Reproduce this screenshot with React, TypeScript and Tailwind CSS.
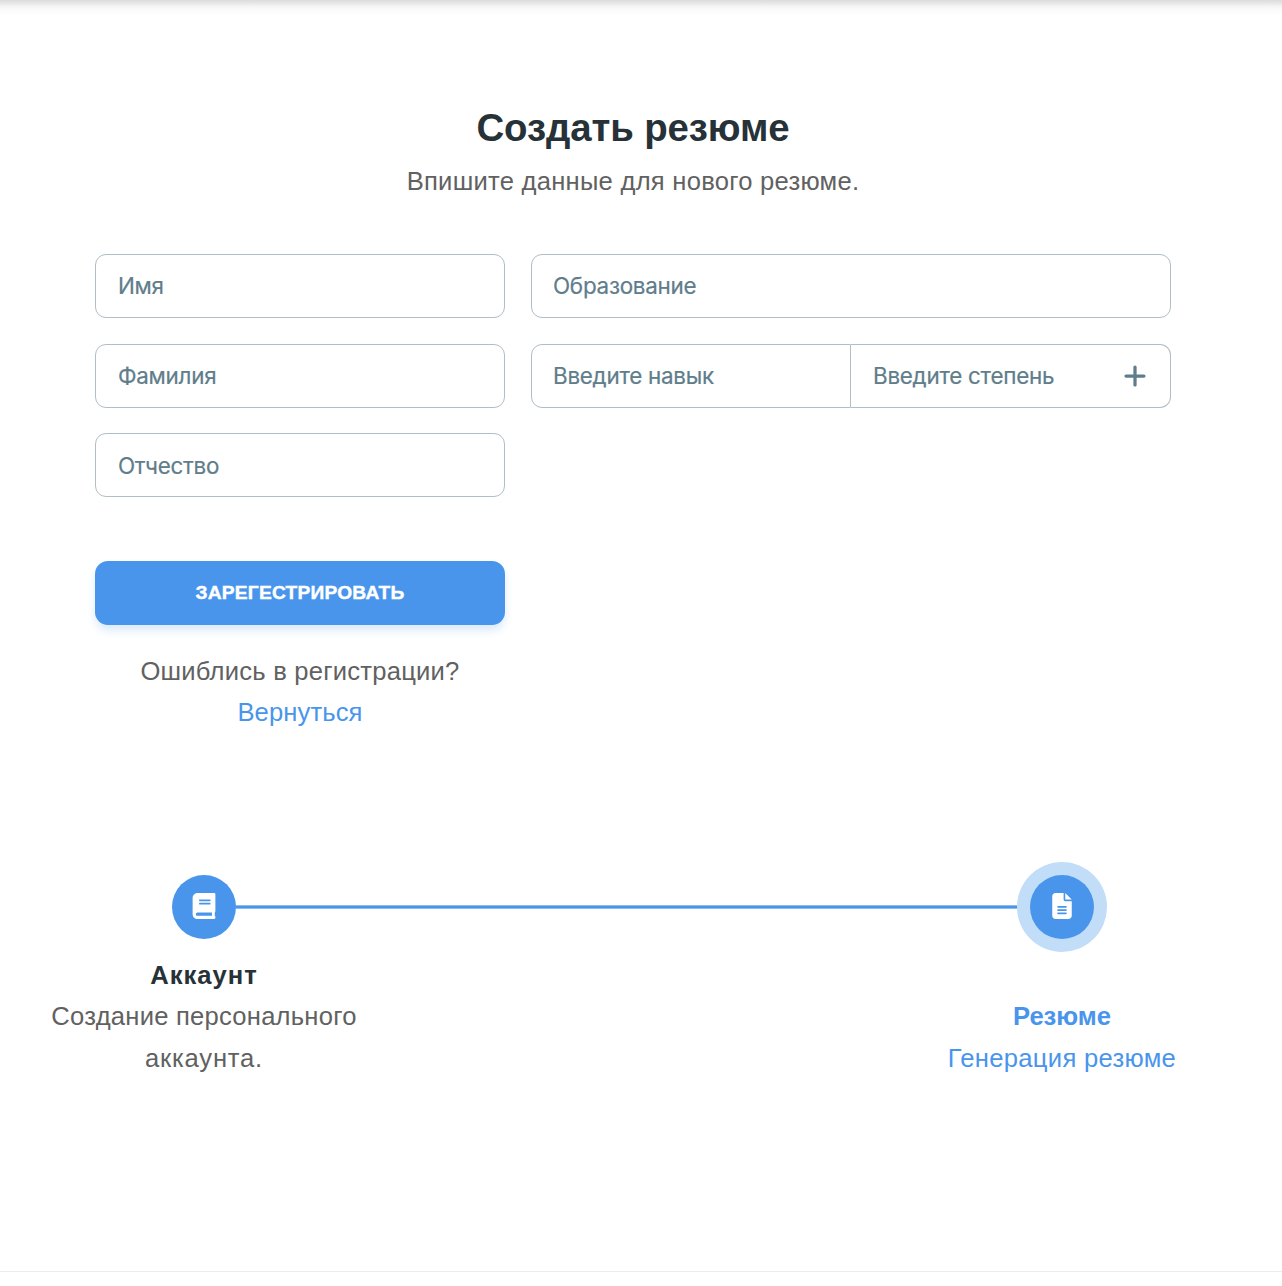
import type { ReactNode } from "react";
import { FaBook } from "react-icons/fa";
import { FaFileLines, FaPlus } from "react-icons/fa6";

function Field({ label, className = "h-16 rounded-[11px] border px-[22px] pt-px" }: { label: string; className?: string }) {
  return (
    <label className={`flex items-center border-[#b0bec5] font-['Inter',sans-serif] text-[22.4px] tracking-[-0.25px] text-[#607d8b] [-webkit-text-stroke:0.2px_#607d8b] ${className}`}>
      <span className="whitespace-nowrap">{label}</span>
    </label>
  );
}

function Circle({ children, active = false }: { children: ReactNode; active?: boolean }) {
  return (
    <div className={`flex size-16 shrink-0 items-center justify-center rounded-full bg-[#4995ec] pb-px text-[26px] text-white ${active ? "ring-[13px] ring-[#c2ddf8]" : ""}`}>
      {children}
    </div>
  );
}

export default function App() {
  return (
    <div className="flex h-[1286px] w-[1282px] flex-col overflow-hidden bg-white font-['Liberation_Sans',Arial,sans-serif]">
      <div className="h-4 shrink-0 bg-[linear-gradient(to_bottom,#dcdcdc_0px,#e6e6e6_3px,#f4f4f4_6px,#fbfbfb_10px,#ffffff_16px)]" />
      <main className="ml-[95px] w-[1076px] pt-[86px]">
        <header className="text-center">
          <h1 className="text-[38.4px] leading-[52px] font-bold tracking-[-0.1px] text-[#263238]">Создать резюме</h1>
          <p className="mt-[7px] text-[25.6px] leading-[41.6px] tracking-[0.25px] text-[#616161]">Впишите данные для нового резюме.</p>
        </header>
        <form className="mt-[51.4px] flex items-start gap-[26px]" onSubmit={(e) => e.preventDefault()}>
          <div className="flex w-[410px] flex-col">
            <div className="flex flex-col gap-[25.6px]">
              <Field label="Имя" className="h-16 rounded-[11px] border px-[22px]" />
              <Field label="Фамилия" />
              <Field label="Отчество" />
            </div>
            <button className="mt-16 h-16 rounded-[13px] bg-[#4995ec] text-[19.2px] font-bold tracking-[0.2px] text-white shadow-[0_6px_10px_-1px_rgba(73,149,236,0.22)] [-webkit-text-stroke:0.4px_white]">
              ЗАРЕГЕСТРИРОВАТЬ
            </button>
            <div className="mt-[25.6px] text-center text-[25.6px] leading-[41.6px] tracking-[0.22px] text-[#616161]">
              <p>Ошиблись в регистрации?</p>
              <a href="#" className="tracking-[0.1px] text-[#4995ec]">Вернуться</a>
            </div>
          </div>
          <div className="flex w-[640px] flex-col gap-[25.6px]">
            <Field label="Образование" className="h-16 rounded-[11px] border px-[21px]" />
            <div className="flex h-16">
              <Field label="Введите навык" className="h-16 w-80 rounded-l-[11px] border px-[21px] pt-px" />
              <div className="flex h-16 w-80 items-center rounded-r-[11px] border-y border-r border-[#b0bec5]">
                <Field label="Введите степень" className="flex-1 pt-px pl-[22px]" />
                <button aria-label="Добавить" className="mr-[22px] text-[26px] text-[#607d8b]"><FaPlus /></button>
              </div>
            </div>
          </div>
        </form>
      </main>
      <section className="mt-[141px] ml-[44px] text-[25.6px] leading-[41.6px]">
        <div className="ml-32 flex w-[922px] items-center">
          <Circle><FaBook /></Circle>
          <div className="h-1 flex-1 border-y border-[#8bbbf3] bg-[#4995ec]" />
          <Circle active><FaFileLines /></Circle>
        </div>
        <div className="mt-[15.6px] flex w-[1178px] items-end justify-between text-center">
          <div className="w-80 tracking-[0.23px] text-[#616161]">
            <h2 className="font-bold tracking-[1px] text-[#263238]">Аккаунт</h2>
            <p>Создание персонального <span className="tracking-[0.8px]">аккаунта.</span></p>
          </div>
          <div className="w-80 text-[#4995ec]">
            <h2 className="font-bold">Резюме</h2>
            <p className="tracking-[0.3px]">Генерация резюме</p>
          </div>
        </div>
      </section>
      <div className="mt-auto mb-[14px] h-px shrink-0 bg-[#ececec]" />
    </div>
  );
}
